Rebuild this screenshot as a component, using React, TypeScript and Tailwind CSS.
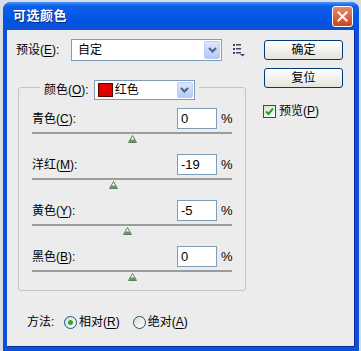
import React from "react";

function U({ c }: { c: string }) {
  return <span className="underline underline-offset-[2px]">{c}</span>;
}

function Arrow({ h }: { h: number }) {
  return (
    <div
      className="flex items-center justify-center w-[16px] rounded-[2px] border border-[#b9cdf8] bg-gradient-to-b from-[#dce7fd] to-[#b4c8f6]"
      style={{ height: h }}
    >
      <svg width="9" height="6" viewBox="0 0 9 6">
        <path d="M1 1 L4.5 4.5 L8 1" fill="none" stroke="#4d6185" strokeWidth="2" />
      </svg>
    </div>
  );
}

function Thumb({ value }: { value: number }) {
  const left = 100.5 + value * 1.005 - 4.5;
  return (
    <svg
      className="absolute top-[3px]"
      style={{ left }}
      width="9"
      height="8"
      viewBox="0 0 9 8"
    >
      <polygon points="4.5,0.5 8.5,7.5 0.5,7.5" fill="#f4f8f4" stroke="#5f7d60" strokeWidth="1" />
      <polygon points="2.3,4.5 6.7,4.5 8,7 1,7" fill="#5f9a62" />
    </svg>
  );
}

function Row({ name, k, value }: { name: string; k: string; value: number }) {
  return (
    <div className="flex flex-col">
      <div className="flex items-center h-[21px] pl-[13px] pr-[12px]">
        <div className="flex-1 text-[12px] text-black">
          {name}(<U c={k} />):
        </div>
        <div className="w-[40px] h-[21px] border border-[#7f9db9] bg-white flex items-center pl-[3px] text-[13px] text-black">
          {value}
        </div>
        <div className="ml-[4px] w-[12px] text-[13px] text-black">%</div>
      </div>
      <div className="relative h-[10px] mx-[13px] mt-[3px]">
        <div className="h-[2px] bg-[#9c9c9c]" />
        <Thumb value={value} />
      </div>
    </div>
  );
}

function Radio({ on }: { on: boolean }) {
  return (
    <div className="w-[13px] h-[13px] rounded-full border border-[#1c5180] bg-gradient-to-br from-[#dcdcd6] to-white flex items-center justify-center">
      {on && <div className="w-[5px] h-[5px] rounded-full bg-[#33a633]" />}
    </div>
  );
}

function Button({ label }: { label: string }) {
  return (
    <div className="w-[79px] h-[20px] rounded-[3px] border border-[#003c74] bg-gradient-to-b from-white to-[#e4e3dc] flex items-center justify-center text-[12px] text-black">
      {label}
    </div>
  );
}

export default function App() {
  return (
    <div className="w-[361px] h-[351px] bg-[#d9dce2] pt-[2px] pl-[3px] overflow-hidden font-['Liberation_Sans','Noto_Sans_CJK_SC',sans-serif]">
      <div className="w-[356px] h-[349px] rounded-t-[8px] bg-[#0b52d8] flex flex-col overflow-hidden">
        <div className="h-[28px] flex items-center justify-between pl-[10px] pr-[6px] bg-[linear-gradient(to_bottom,#4a98ff_0%,#0e5fe8_14%,#0356e6_55%,#0a4fd8_100%)]">
          <div className="text-white font-bold text-[13px] tracking-[0.5px] [text-shadow:1px_1px_0_#0a2a80]">
            可选颜色
          </div>
          <div className="w-[21px] h-[21px] rounded-[3px] border border-white bg-gradient-to-b from-[#e8866a] to-[#c9451f] flex items-center justify-center">
            <svg width="11" height="11" viewBox="0 0 11 11">
              <path d="M1.5 1.5 L9.5 9.5 M9.5 1.5 L1.5 9.5" stroke="white" strokeWidth="2" strokeLinecap="square" />
            </svg>
          </div>
        </div>
        <div className="mx-[4px] mb-[4px] flex-1 bg-[#ececec] flex border-r border-b border-[#0a2b95]">
          <div className="w-[243px] flex flex-col">
            <div className="mt-[9px] h-[22px] flex items-center pl-[9px]">
              <div className="w-[55px] text-[12px] text-black">
                预设(<U c="E" />):
              </div>
              <div className="w-[151px] h-[22px] border border-[#7f9db9] bg-white flex items-center justify-between pl-[6px] pr-[1px]">
                <span className="text-[12px] text-black">自定</span>
                <Arrow h={18} />
              </div>
              <svg className="ml-[11px]" width="12" height="14" viewBox="0 0 12 14">
                <rect x="0" y="1" width="2" height="2" fill="#3c4663" />
                <rect x="0" y="5" width="2" height="2" fill="#3c4663" />
                <rect x="0" y="9" width="2" height="2" fill="#3c4663" />
                <rect x="3" y="1" width="5" height="1.5" fill="#3c4663" />
                <rect x="3" y="5" width="5" height="1.5" fill="#3c4663" />
                <rect x="3" y="9" width="5" height="1.5" fill="#3c4663" />
                <polygon points="7,11 12,11 9.5,13.5" fill="#3c4663" />
              </svg>
            </div>
            <div className="mt-[26px] ml-[11px] w-[228px] h-[204px] border border-[#c4c4c4] rounded-[3px] flex flex-col">
              <div className="-mt-[8px] ml-[21px] px-[4px] bg-[#ececec] self-start flex items-center gap-[5px] h-[20px]">
                <div className="text-[12px] text-black">
                  颜色(<U c="O" />):
                </div>
                <div className="w-[101px] h-[20px] border border-[#7f9db9] bg-white flex items-center pl-[3px] pr-[1px]">
                  <div className="w-[15px] h-[14px] bg-[#e00000] border border-[#5a0000]" />
                  <span className="ml-[2px] flex-1 text-[12px] text-black">红色</span>
                  <Arrow h={16} />
                </div>
              </div>
              <div className="mt-[8px] flex flex-col gap-[12px]">
                <Row name="青色" k="C" value={0} />
                <Row name="洋红" k="M" value={-19} />
                <Row name="黄色" k="Y" value={-5} />
                <Row name="黑色" k="B" value={0} />
              </div>
            </div>
            <div className="mt-[23px] ml-[20px] h-[16px] flex items-center text-[12px] text-black">
              <div className="w-[37px]">方法:</div>
              <Radio on={true} />
              <div className="ml-[2px]">
                相对(<U c="R" />)
              </div>
              <div className="ml-[13px]">
                <Radio on={false} />
              </div>
              <div className="ml-[2px]">
                绝对(<U c="A" />)
              </div>
            </div>
          </div>
          <div className="flex flex-col pl-[14px]">
            <div className="mt-[10px]">
              <Button label="确定" />
            </div>
            <div className="mt-[8px]">
              <Button label="复位" />
            </div>
            <div className="mt-[14px] -ml-[1px] flex items-center gap-[3px]">
              <div className="w-[13px] h-[13px] border border-[#1c5180] bg-gradient-to-br from-[#dcdcd6] to-white flex items-center justify-center">
                <svg width="9" height="9" viewBox="0 0 9 9">
                  <path d="M1 4.5 L3.5 7 L8 1.5" fill="none" stroke="#21a121" strokeWidth="2" />
                </svg>
              </div>
              <div className="text-[12px] text-black">
                预览(<U c="P" />)
              </div>
            </div>
          </div>
        </div>
      </div>
    </div>
  );
}
